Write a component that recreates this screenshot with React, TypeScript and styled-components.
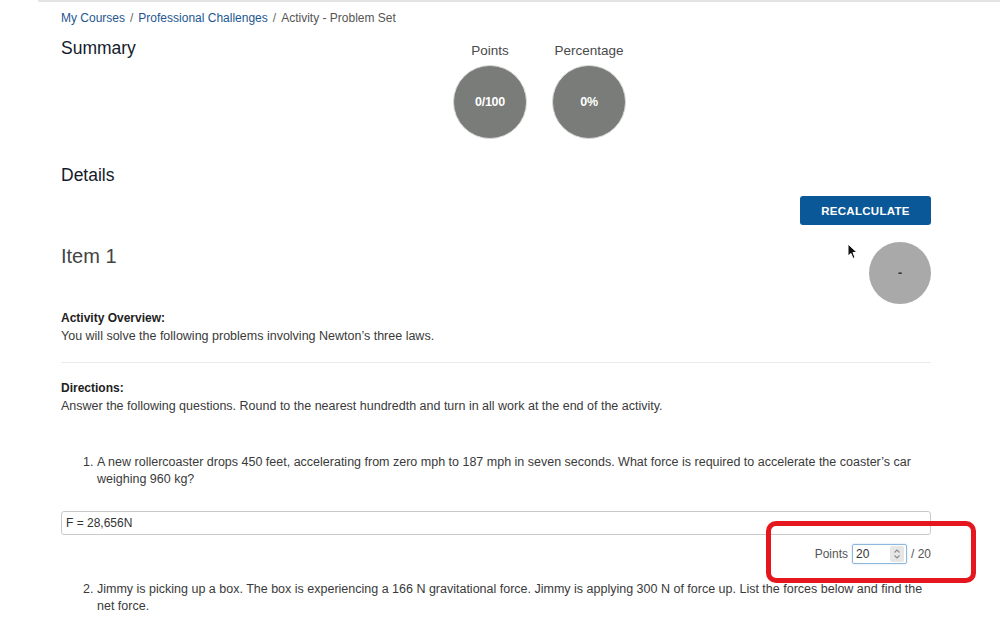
import React, { FC } from 'react'
import styled, { createGlobalStyle } from 'styled-components'

const GlobalStyle = createGlobalStyle`
    html, body {
        margin: 0;
        padding: 0;
        background: #FFFFFF;
        font-family: "Liberation Sans", Arial, Helvetica, sans-serif;
    }
`

const Page = styled.div`
    margin-left: 38px;
    border-top: 2px solid #E4E4E4;
    padding: 0 69px 0 23px;
    color: #333333;
`

const Crumbs = styled.nav`
    padding-top: 9px;
    font-size: 12px;
    line-height: 15px;
    color: #555555;
    > a {
        color: #1D5690;
        text-decoration: none;
    }
    > span.sep {
        margin: 0 5px;
        color: #666666;
    }
`

const SummaryRow = styled.section`
    margin-top: 12px;
    display: flex;
    align-items: flex-start;
`

const SectionTitle = styled.h2< { width?: number } >`
    margin: 0;
    width: ${ p => p.width ? `${ p.width }px` : 'auto' };
    font-size: 17.5px;
    line-height: 20px;
    font-weight: normal;
    color: #141A2A;
`

const Stats = styled.div`
    display: flex;
    gap: 25px;
    padding-top: 5px;
`

const Stat = styled.div`
    display: flex;
    flex-direction: column;
    align-items: center;
    > span {
        font-size: 13.5px;
        line-height: 15px;
        color: #4A4A4A;
    }
`

const Circle = styled.div< { size: number, tone: string, ink: string } >`
    width: ${ p => p.size }px;
    height: ${ p => p.size }px;
    border-radius: 50%;
    background: ${ p => p.tone };
    color: ${ p => p.ink };
    display: flex;
    align-items: center;
    justify-content: center;
    font-size: 12.5px;
    font-weight: bold;
    letter-spacing: -0.3px;
`

const StatCircle = styled( Circle )`
    margin-top: 7px;
    border: 1px solid #D8D8D8;
    box-sizing: border-box;
`

const DetailsTitle = styled( SectionTitle )`
    margin-top: 26px;
`

const ButtonRow = styled.div`
    margin-top: 11px;
    display: flex;
    justify-content: flex-end;
`

const Button = styled.button`
    height: 29px;
    width: 131px;
    border: none;
    border-radius: 3px;
    background: #0A5897;
    color: #FFFFFF;
    font-family: inherit;
    font-size: 11.5px;
    font-weight: bold;
    letter-spacing: 0.3px;
`

const ItemRow = styled.div`
    position: relative;
    margin-top: 17px;
    display: flex;
    justify-content: space-between;
    align-items: flex-start;
    > h3 {
        margin: 2px 0 0;
        font-size: 20px;
        line-height: 24px;
        font-weight: normal;
        color: #444444;
    }
`

const Cursor = styled.svg`
    position: absolute;
    left: 786px;
    top: 1px;
`

const Block = styled.div< { gap: number } >`
    margin-top: ${ p => p.gap }px;
    font-size: 12.5px;
    line-height: 14px;
    color: #3A3A3A;
    > strong {
        display: block;
        font-size: 12px;
        color: #222222;
    }
    > p {
        margin: 4px 0 0;
    }
`

const Rule = styled.hr`
    margin: 19px 0 0;
    border: none;
    border-top: 1px solid #EBEBEB;
`

const Questions = styled.ol< { gap: number } >`
    margin: ${ p => p.gap }px 0 0;
    padding: 0 4px 0 36px;
    font-size: 12.5px;
    line-height: 17px;
    color: #3A3A3A;
`

const Answer = styled.div`
    margin-top: 23px;
    height: 24px;
    box-sizing: border-box;
    border: 1px solid #C9C9C9;
    border-radius: 3px;
    padding: 0 4px;
    display: flex;
    align-items: center;
    font-size: 12px;
    color: #333333;
`

const PointsRow = styled.div`
    position: relative;
    margin-top: 9px;
    display: flex;
    justify-content: flex-end;
    align-items: center;
    gap: 4px;
    font-size: 12px;
    color: #555555;
`

const NumberBox = styled.div`
    width: 55px;
    height: 20px;
    box-sizing: border-box;
    border: 1px solid #8DB8DC;
    border-radius: 2px;
    box-shadow: 0 0 2px #B9D6EE;
    display: flex;
    align-items: center;
    justify-content: space-between;
    padding: 0 2px 0 3px;
    color: #333333;
    font-size: 12px;
`

const Spinner = styled.span`
    width: 14px;
    height: 16px;
    background: #E6E6E6;
    border-radius: 2px;
    display: flex;
    align-items: center;
    justify-content: center;
`

const Highlight = styled.div`
    position: absolute;
    right: -45px;
    top: -23px;
    width: 210px;
    height: 62px;
    box-sizing: border-box;
    border: 5px solid #E5161E;
    border-radius: 10px;
    pointer-events: none;
`

interface StatProps {
    label: string
    value: string
}

const StatBox: FC< StatProps > = ({ label, value }) => <Stat>
    <span>{ label }</span>
    <StatCircle size={ 74 } tone="#7A7C79" ink="#FFFFFF">{ value }</StatCircle>
</Stat>

const App: FC = () => <>
    <GlobalStyle />
    <Page>
        <Crumbs>
            <a>My Courses</a>
            <span className="sep">/</span>
            <a>Professional Challenges</a>
            <span className="sep">/</span>
            <span>Activity - Problem Set</span>
        </Crumbs>

        <SummaryRow>
            <SectionTitle width={ 392 }>Summary</SectionTitle>
            <Stats>
                <StatBox label="Points" value="0/100" />
                <StatBox label="Percentage" value="0%" />
            </Stats>
        </SummaryRow>

        <DetailsTitle>Details</DetailsTitle>
        <ButtonRow>
            <Button>RECALCULATE</Button>
        </ButtonRow>

        <ItemRow>
            <h3>Item 1</h3>
            <Circle size={ 62 } tone="#A9A9A9" ink="#333333">-</Circle>
            <Cursor width="11" height="17" viewBox="0 0 11 17">
                <path d="M1 1 L1 13 L4 10.5 L6 15.5 L8 14.5 L6 9.5 L10 9.5 Z" fill="#111111" stroke="#FFFFFF" strokeWidth="1" />
            </Cursor>
        </ItemRow>

        <Block gap={ 7 }>
            <strong>Activity Overview:</strong>
            <p>You will solve the following problems involving Newton’s three laws.</p>
        </Block>

        <Rule />

        <Block gap={ 18 }>
            <strong>Directions:</strong>
            <p>Answer the following questions. Round to the nearest hundredth and turn in all work at the end of the activity.</p>
        </Block>

        <Questions gap={ 41 }>
            <li>A new rollercoaster drops 450 feet, accelerating from zero mph to 187 mph in seven seconds. What force is required to accelerate the coaster’s car weighing 960 kg?</li>
        </Questions>

        <Answer>F = 28,656N</Answer>

        <PointsRow>
            <span>Points</span>
            <NumberBox>
                <span>20</span>
                <Spinner>
                    <svg width="8" height="12" viewBox="0 0 8 12">
                        <path d="M1.5 4.5 L4 2 L6.5 4.5 M1.5 7.5 L4 10 L6.5 7.5" fill="none" stroke="#8A8A8A" strokeWidth="1.1" />
                    </svg>
                </Spinner>
            </NumberBox>
            <span>/ 20</span>
            <Highlight />
        </PointsRow>

        <Questions start={ 2 } gap={ 17 }>
            <li>Jimmy is picking up a box. The box is experiencing a 166 N gravitational force. Jimmy is applying 300 N of force up. List the forces below and find the net force.</li>
        </Questions>
    </Page>
</>

export default App
